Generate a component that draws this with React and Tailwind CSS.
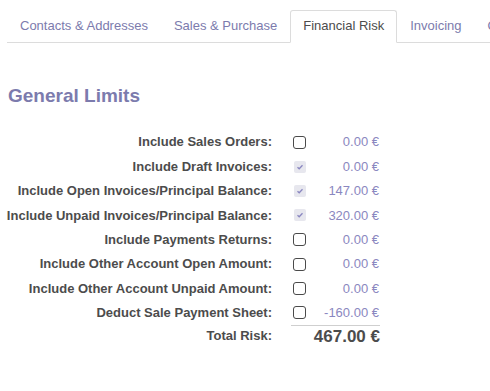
import React from "react";

const tabs = [
  { label: "Contacts & Addresses" },
  { label: "Sales & Purchase" },
  { label: "Financial Risk", active: true },
  { label: "Invoicing" },
  { label: "Other Info" },
];

const rows = [
  { label: "Include Sales Orders:", checked: false, value: "0.00 €" },
  { label: "Include Draft Invoices:", checked: true, value: "0.00 €" },
  { label: "Include Open Invoices/Principal Balance:", checked: true, value: "147.00 €" },
  { label: "Include Unpaid Invoices/Principal Balance:", checked: true, value: "320.00 €" },
  { label: "Include Payments Returns:", checked: false, value: "0.00 €" },
  { label: "Include Other Account Open Amount:", checked: false, value: "0.00 €" },
  { label: "Include Other Account Unpaid Amount:", checked: false, value: "0.00 €" },
  { label: "Deduct Sale Payment Sheet:", checked: false, value: "-160.00 €" },
];

function Checkbox({ checked }) {
  if (checked) {
    return (
      <span className="flex h-[12px] w-[12px] items-center justify-center rounded-[2px] bg-[#e7e7ee]">
        <svg width="8" height="8" viewBox="0 0 8 8">
          <path d="M1.5 4.2 L3.2 5.8 L6.5 2.3" fill="none" stroke="#8a87c0" strokeWidth="1.3" />
        </svg>
      </span>
    );
  }
  return <span className="block h-[13px] w-[13px] rounded-[3px] border-[1.5px] border-[#4a4a4a] bg-white" />;
}

export default function App() {
  return (
    <div className="h-[391px] w-[490px] overflow-hidden bg-white font-['Liberation_Sans',Arial,sans-serif]">
      {/* Tabs */}
      <div className="ml-[7px] mt-[10px] flex whitespace-nowrap border-b border-[#dcdcdc] text-[13px]">
        {tabs.map((t) => (
          <div
            key={t.label}
            className={
              t.active
                ? "-mb-px h-[33px] shrink-0 rounded-t-[3px] border border-b-white border-[#dcdcdc] bg-white px-[12px] pt-[5px] text-[#4c4c4c]"
                : "h-[32px] shrink-0 border border-transparent px-[12px] pt-[5px] text-[#7c7bad]"
            }
          >
            {t.label}
          </div>
        ))}
      </div>

      {/* General Limits */}
      <h1 className="ml-[8px] mt-[41px] text-[19px] font-bold leading-[24px] text-[#7c7bad]">
        General Limits
      </h1>

      <div className="mt-[22px] text-[13px]">
        {rows.map((r) => (
          <div key={r.label} className="flex h-[24.4px] items-center">
            <div className="w-[272px] text-right font-bold text-[#4c4c4c]">{r.label}</div>
            <div className="ml-[21px] flex w-[13px] justify-center">
              <Checkbox checked={r.checked} />
            </div>
            <div className="w-[73px] text-right text-[#8a87c0]">{r.value}</div>
          </div>
        ))}
        <div className="flex items-start">
          <div className="w-[272px] pt-[1px] text-right font-bold text-[#4c4c4c]">Total Risk:</div>
          <div className="ml-[19px] w-[89px] border-t border-[#cfcfcf] pt-[1px] text-right text-[17px] font-bold leading-[20px] text-[#4c4c4c]">
            467.00 €
          </div>
        </div>
      </div>
    </div>
  );
}
